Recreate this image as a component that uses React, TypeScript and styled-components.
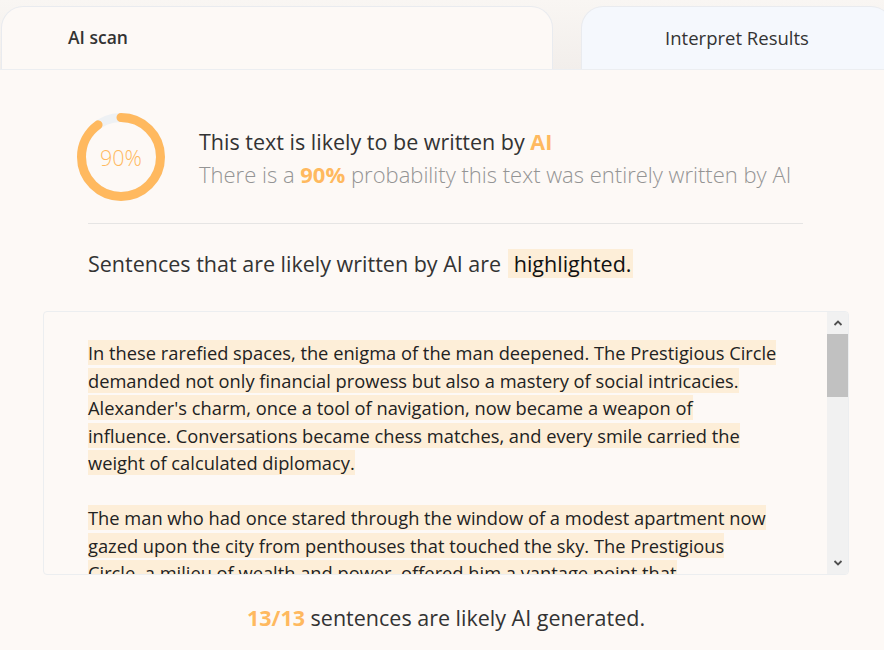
import React from "react";
import styled, { createGlobalStyle } from "styled-components";

const GlobalStyle = createGlobalStyle`
  html, body {
    margin: 0;
    padding: 0;
    background: #fdf9f6;
    font-family: "Open Sans", "Noto Sans", sans-serif;
    color: #333;
    overflow: hidden;
  }
`;

const ORANGE = "#ffb95f";
const HIGHLIGHT = "#fdeed8";

const Page = styled.div`
  width: 884px;
  height: 650px;
  display: flex;
  flex-direction: column;
  overflow: hidden;
`;

const TabBar = styled.div`
  display: flex;
  align-items: flex-end;
  gap: 28px;
  height: 70px;
  padding-left: 1px;
  background: linear-gradient(180deg, #f9f6f3 0%, #f2eeeb 100%);
  border-bottom: 1px solid #eceef1;
  box-sizing: border-box;
`;

const Tab = styled.div<{ $active?: boolean; $width: number }>`
  flex: 0 0 ${(p) => p.$width}px;
  height: 63px;
  box-sizing: border-box;
  border: 1px solid #e9ebef;
  border-bottom: none;
  border-radius: 22px 22px 0 0;
  background: ${(p) => (p.$active ? "#fdf9f6" : "#f5f8fd")};
  display: flex;
  align-items: center;
  justify-content: ${(p) => (p.$active ? "flex-start" : "center")};
  padding-left: ${(p) => (p.$active ? "66px" : "0")};
  padding-bottom: 2px;
  font-size: ${(p) => (p.$active ? "17.5px" : "18.5px")};
  font-weight: ${(p) => (p.$active ? 600 : 400)};
  color: #333;
`;

const Content = styled.div`
  flex: 1;
  display: flex;
  flex-direction: column;
  padding: 0 35px 0 43px;
`;

const Summary = styled.div`
  display: flex;
  align-items: flex-start;
  gap: 34px;
  padding: 43px 0 0 34px;
`;

const Ring = styled.div`
  position: relative;
  width: 88px;
  height: 88px;
  flex: 0 0 88px;
`;

const RingLabel = styled.span`
  position: absolute;
  inset: 0;
  display: flex;
  align-items: center;
  justify-content: center;
  color: ${ORANGE};
  font-size: 21.5px;
  font-weight: 300;
`;

const SummaryText = styled.div`
  display: flex;
  flex-direction: column;
  margin-top: 12px;
`;

const Headline = styled.div`
  font-size: 21.5px;
  line-height: 33px;
  color: #333;
`;

const Subline = styled.div`
  font-size: 22px;
  line-height: 33px;
  font-weight: 300;
  color: #949494;
`;

const Accent = styled.b`
  color: ${ORANGE};
  font-weight: 700;
`;

const Divider = styled.hr`
  margin: 22px 46px 0 45px;
  border: none;
  border-top: 1px solid #e6e5e4;
`;

const Legend = styled.div`
  margin: 26px 0 0 45px;
  font-size: 21.5px;
  color: #333;
  line-height: 28px;
`;

const Marked = styled.span`
  background: ${HIGHLIGHT};
  color: #111;
  padding: 0 2px 0 6px;
  margin-left: 1px;
`;

const ScrollBox = styled.div`
  margin-top: 33px;
  height: 264px;
  box-sizing: border-box;
  border: 1px solid #eceef0;
  border-radius: 4px;
  display: flex;
  overflow: hidden;
`;

const TextPane = styled.div`
  flex: 1;
  overflow: hidden;
  padding: 27px 47.5px 28px 44px;
`;

const ScrollTrack = styled.div`
  flex: 0 0 21px;
  background: #f1f1f1;
  display: flex;
  flex-direction: column;
`;

const ArrowButton = styled.div`
  height: 22px;
  display: flex;
  align-items: center;
  justify-content: center;
`;

const Thumb = styled.div`
  height: 63px;
  background: #c1c1c1;
`;

const TrackRest = styled.div`
  flex: 1;
`;

const Paragraph = styled.p`
  margin: 0 0 27.5px;
  font-size: 18.3px;
  line-height: 27.5px;
  color: #222;
`;

const Sentence = styled.span`
  background: ${HIGHLIGHT};
`;

const Footer = styled.div`
  margin-top: 30px;
  text-align: center;
  font-size: 21.5px;
  line-height: 26px;
  color: #333;
`;

const paragraphs: string[][] = [
  [
    "In these rarefied spaces, the enigma of the man deepened.",
    "The Prestigious Circle demanded not only financial prowess but also a mastery of social intricacies.",
    "Alexander's charm, once a tool of navigation, now became a weapon of influence.",
    "Conversations became chess matches, and every smile carried the weight of calculated diplomacy.",
  ],
  [
    "The man who had once stared through the window of a modest apartment now gazed upon the city from penthouses that touched the sky.",
    "The Prestigious Circle, a milieu of wealth and power, offered him a vantage point that transcended the ordinary boundaries of ambition.",
    "Yet the higher he climbed, the thinner the air of genuine connection became.",
  ],
  [
    "Each gala and private dinner was a stage, and Alexander learned to play every role with quiet precision.",
    "Allies emerged from the shadows of ambition, while rivals waited patiently for the smallest misstep.",
    "He measured his words as carefully as his investments, knowing that both could rise or fall in an instant.",
  ],
  [
    "In the solitude of late nights, he wondered whether the boy from the modest apartment still existed.",
    "The city lights below flickered like distant memories of a simpler life.",
    "And still, the Circle beckoned him further into its gilded labyrinth.",
  ],
];

const Chevron = ({ up }: { up?: boolean }) => (
  <svg width="10" height="8" viewBox="0 0 10 8">
    <path
      d={up ? "M1.5 6 L5 2.5 L8.5 6" : "M1.5 2 L5 5.5 L8.5 2"}
      fill="none"
      stroke="#505050"
      strokeWidth="1.8"
    />
  </svg>
);

const ProgressRing = ({ value }: { value: number }) => {
  const r = 39.5;
  const c = 2 * Math.PI * r;
  return (
    <Ring>
      <svg width="88" height="88" viewBox="0 0 88 88">
        <circle cx="44" cy="44" r={r} fill="none" stroke="#eef1f4" strokeWidth="9" />
        <circle
          cx="44"
          cy="44"
          r={r}
          fill="none"
          stroke={ORANGE}
          strokeWidth="9"
          strokeLinecap="round"
          strokeDasharray={`${(c * value) / 100} ${c}`}
          transform="rotate(-90 44 44)"
        />
      </svg>
      <RingLabel>{value}%</RingLabel>
    </Ring>
  );
};

const App = () => {
  const total = paragraphs.reduce((n, p) => n + p.length, 0);

  return (
    <Page>
      <GlobalStyle />
      <TabBar>
        <Tab $active $width={552}>
          AI scan
        </Tab>
        <Tab $width={312}>Interpret Results</Tab>
      </TabBar>
      <Content>
        <Summary>
          <ProgressRing value={90} />
          <SummaryText>
            <Headline>
              This text is likely to be written by <Accent>AI</Accent>
            </Headline>
            <Subline>
              There is a <Accent>90%</Accent> probability this text was entirely
              written by AI
            </Subline>
          </SummaryText>
        </Summary>
        <Divider />
        <Legend>
          Sentences that are likely written by AI are <Marked>highlighted.</Marked>
        </Legend>
        <ScrollBox>
          <TextPane>
            {paragraphs.map((sentences, i) => (
              <Paragraph key={i}>
                {sentences.map((s, j) => (
                  <Sentence key={j}>
                    {s}
                    {j < sentences.length - 1 ? " " : ""}
                  </Sentence>
                ))}
              </Paragraph>
            ))}
          </TextPane>
          <ScrollTrack>
            <ArrowButton>
              <Chevron up />
            </ArrowButton>
            <Thumb />
            <TrackRest />
            <ArrowButton>
              <Chevron />
            </ArrowButton>
          </ScrollTrack>
        </ScrollBox>
        <Footer>
          <Accent>
            {total}/{total}
          </Accent>{" "}
          sentences are likely AI generated.
        </Footer>
      </Content>
    </Page>
  );
};

export default App;
